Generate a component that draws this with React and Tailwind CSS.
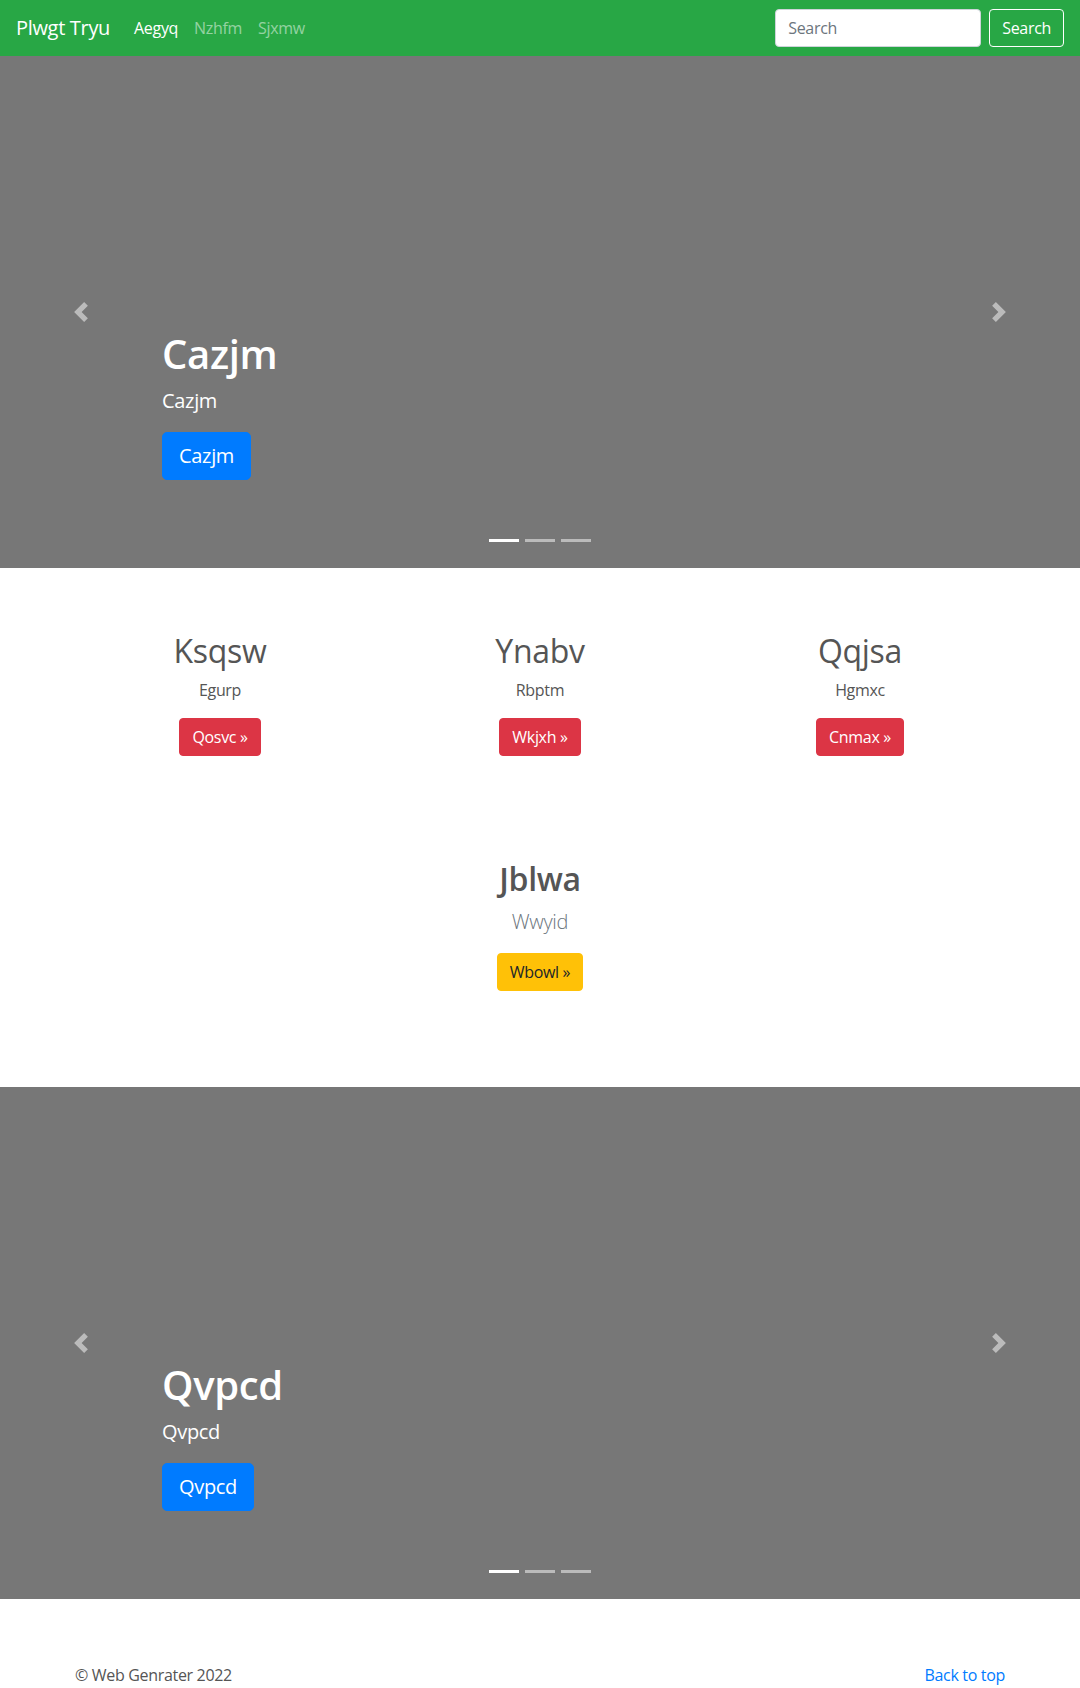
import React from "react";

const FONT = {
  fontFamily: '"Open Sans", "Noto Sans", "Liberation Sans", sans-serif',
  letterSpacing: "-0.02em",
};

function Prev() {
  return (
    <svg width="20" height="20" viewBox="0 0 8 8" fill="#fff">
      <path d="M5.25 0l-4 4 4 4 1.5-1.5L4.25 4l2.5-2.5L5.25 0z" />
    </svg>
  );
}

function Next() {
  return (
    <svg width="20" height="20" viewBox="0 0 8 8" fill="#fff">
      <path d="M2.75 0l-1.5 1.5L3.75 4l-2.5 2.5L2.75 8l4-4-4-4z" />
    </svg>
  );
}

function Carousel({ title }) {
  return (
    <div className="relative h-[512px] bg-[#777777] overflow-hidden">
      <div className="absolute left-[15%] right-[15%] bottom-[52px] pt-5 pb-5 text-left text-white z-10">
        <h1 className="text-[40px] leading-[48px] font-semibold mb-2">{title}</h1>
        <p className="text-[20px] leading-[30px] mb-4">{title}</p>
        <div className="flex mb-4">
          <a
            href="#"
            className="inline-block bg-[#007bff] border border-[#007bff] text-white text-[20px] leading-[30px] px-4 py-2 rounded-[5px]"
          >
            {title}
          </a>
        </div>
      </div>
      <a href="#" className="absolute top-0 bottom-0 left-0 w-[15%] flex items-center justify-center opacity-50">
        <Prev />
      </a>
      <a href="#" className="absolute top-0 bottom-0 right-0 w-[15%] flex items-center justify-center opacity-50">
        <Next />
      </a>
      <div className="absolute left-0 right-0 bottom-[26px] flex justify-center">
        <span className="block w-[30px] h-[3px] mx-[3px] bg-white" />
        <span className="block w-[30px] h-[3px] mx-[3px] bg-white opacity-50" />
        <span className="block w-[30px] h-[3px] mx-[3px] bg-white opacity-50" />
      </div>
    </div>
  );
}

function Col({ title, text, btn }) {
  return (
    <div className="px-[15px] text-center">
      <h2 className="text-[32px] leading-[38px] font-normal text-[#555555] mb-2">{title}</h2>
      <p className="text-[16px] leading-6 text-[#555555] mx-3 mb-4">{text}</p>
      <div className="flex justify-center">
        <a
          href="#"
          className="inline-block bg-[#dc3545] border border-[#dc3545] text-white text-[16px] leading-6 px-3 py-[6px] rounded-[4px]"
        >
          {btn} »
        </a>
      </div>
    </div>
  );
}

export default function App() {
  return (
    <div style={FONT} className="bg-white text-[#212529] min-h-[1688px]">
      <nav className="h-14 bg-[#28a745] flex items-center px-4">
        <a href="#" className="text-white text-[20px] leading-[30px] py-[5px] mr-4">
          Plwgt Tryu
        </a>
        <ul className="flex">
          <li>
            <a href="#" className="block px-2 py-2 text-[16px] leading-6 text-white">Aegyq</a>
          </li>
          <li>
            <a href="#" className="block px-2 py-2 text-[16px] leading-6 text-white/50">Nzhfm</a>
          </li>
          <li>
            <a href="#" className="block px-2 py-2 text-[16px] leading-6 text-white/50">Sjxmw</a>
          </li>
        </ul>
        <div className="ml-auto flex items-center">
          <input
            type="text"
            placeholder="Search"
            className="w-[206px] h-[38px] bg-white border border-[#ced4da] rounded-[4px] px-3 text-[16px] text-[#495057] placeholder:text-[#6c757d] outline-none"
          />
          <button className="ml-2 h-[38px] px-3 border border-white rounded-[4px] text-white text-[16px] leading-6">
            Search
          </button>
        </div>
      </nav>

      <Carousel title="Cazjm" />

      <div className="w-[960px] mx-auto mt-16">
        <div className="grid grid-cols-3">
          <Col title="Ksqsw" text="Egurp" btn="Qosvc" />
          <Col title="Ynabv" text="Rbptm" btn="Wkjxh" />
          <Col title="Qqjsa" text="Hgmxc" btn="Cnmax" />
        </div>
        <div className="text-center mt-[103px] mb-[96px]">
          <h2 className="text-[32px] leading-[40px] font-semibold text-[#555555] mb-2">Jblwa</h2>
          <p className="text-[20px] leading-[30px] font-light text-[#6c757d] mb-4">Wwyid</p>
          <div className="flex justify-center">
            <a
              href="#"
              className="inline-block bg-[#ffc107] border border-[#ffc107] text-[#212529] text-[16px] leading-6 px-3 py-[6px] rounded-[4px]"
            >
              Wbowl »
            </a>
          </div>
        </div>
      </div>

      <Carousel title="Qvpcd" />

      <footer className="w-[960px] mx-auto px-[15px] mt-16 flex justify-between text-[16px] leading-6">
        <p className="text-[#555555]">© Web Genrater 2022</p>
        <a href="#" className="text-[#007bff]">Back to top</a>
      </footer>
    </div>
  );
}
